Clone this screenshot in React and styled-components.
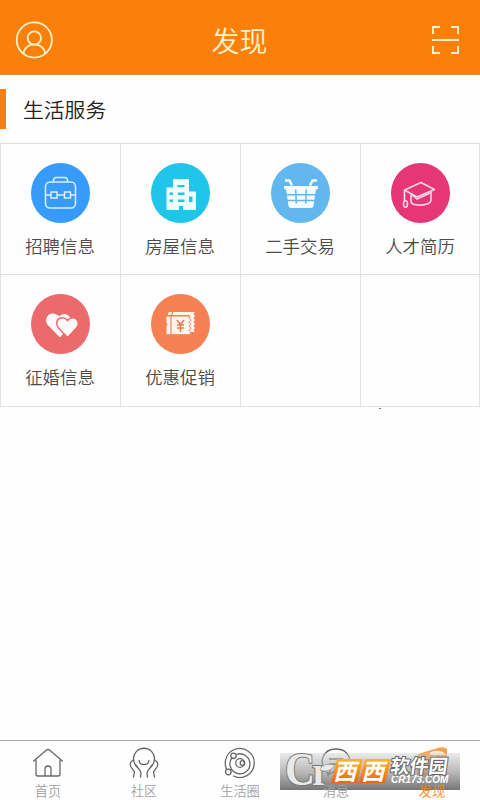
import React from "react";
import styled, { createGlobalStyle } from "styled-components";

const GlobalStyle = createGlobalStyle`
  * {
    box-sizing: border-box;
  }
  body {
    margin: 0;
    background: #fefefe;
    font-family: "Noto Sans CJK SC", "Noto Sans", sans-serif;
    font-weight: 350;
  }
`;

const Screen = styled.div`
  position: relative;
  display: flex;
  flex-direction: column;
  width: 480px;
  height: 800px;
  overflow: hidden;
`;

const Header = styled.header`
  display: flex;
  align-items: center;
  justify-content: space-between;
  height: 75px;
  padding: 6px 20px 0 15px;
  background: #fa800b;
  border-bottom: 1px solid #dc8c49;
  color: #fff0c6;
`;

const Title = styled.h1`
  margin: 0;
  padding-right: 5px;
  font-size: 28px;
  line-height: 40px;
  font-weight: 350;
`;

const SectionHead = styled.div`
  display: flex;
  align-items: center;
  height: 68px;
`;

const Marker = styled.span`
  width: 6px;
  height: 40px;
  background: #f8800f;
`;

const SectionTitle = styled.h2`
  margin: 0 0 0 17px;
  font-size: 20.8px;
  line-height: 30px;
  font-weight: 350;
  color: #222;
`;

const Grid = styled.div`
  display: grid;
  grid-template-columns: repeat(4, 120px);
  grid-template-rows: 131px 132px;
  border-top: 1px solid #dedede;
`;

const Cell = styled.div`
  display: flex;
  flex-direction: column;
  align-items: center;
  padding: 19px 1px 0 0;
  border-left: 1px solid #e2e2e2;
  border-bottom: 1px solid #dedede;
  &:nth-child(4n) {
    padding-right: 0;
    border-right: 1px solid #e2e2e2;
  }
`;

const Circle = styled.div`
  width: 59px;
  height: 60px;
  border-radius: 50%;
  background: ${(props) => props.$color};
  svg {
    display: block;
    width: 59px;
    height: 60px;
  }
`;

const CellLabel = styled.span`
  margin-top: 10px;
  font-size: 17.4px;
  line-height: 26px;
  color: #4c4c4c;
  white-space: nowrap;
`;

const Speck = styled.span`
  width: 2px;
  height: 1px;
  margin: 1px 0 0 379px;
  background: #777;
`;

const TabBar = styled.nav`
  display: flex;
  height: 60px;
  margin-top: auto;
  border-top: 1px solid #a9a9a9;
`;

const Tab = styled.div`
  display: flex;
  flex: 1;
  flex-direction: column;
  align-items: center;
  padding-top: 6px;
  color: ${(props) => (props.$active ? "#f5a04d" : "#686868")};
  svg {
    display: block;
    flex-shrink: 0;
  }
`;

const TabLabel = styled.span`
  position: relative;
  z-index: 2;
  margin-top: 2px;
  font-size: 13.2px;
  line-height: 20px;
  color: ${(props) => (props.$active ? "#f0871c" : "#a2a2a2")};
`;

/* site stamp lying over the tab bar */
const Stamp = styled.div`
  position: absolute;
  left: 280px;
  top: 753px;
  z-index: 1;
  display: flex;
  width: 180px;
  height: 37px;
  background: linear-gradient(
    rgba(205, 205, 205, 0.4),
    rgba(160, 160, 160, 0.72) 50%,
    rgba(110, 110, 110, 0.94)
  );
`;

const StampInitials = styled.svg`
  flex: none;
  width: 54px;
  height: 37px;
  overflow: visible;
  fill: #e9e9e9;
  stroke: #777;
  stroke-width: 2px;
  paint-order: stroke;
  font-family: "Liberation Serif", serif;
  font-weight: 700;
`;

const StampBadge = styled.span`
  display: flex;
  flex: none;
  width: 54px;
  height: 24px;
  margin-top: 6px;
  gap: 2px;
  transform: skewX(-14deg);
`;

const BadgeChar = styled.span`
  flex: 1;
  background: linear-gradient(#ffb52c, #ee6413);
  color: #fff;
  font-size: 23px;
  font-weight: 700;
  line-height: 22px;
  text-align: center;
`;

const StampText = styled.span`
  display: flex;
  flex-direction: column;
  padding: 1px 0 0 3px;
  color: #fff;
  font-weight: 700;
  -webkit-text-stroke: 2px #666;
  paint-order: stroke fill;
  white-space: nowrap;
`;

const StampName = styled.span`
  font-size: 19px;
  line-height: 21px;
  transform: skewX(-8deg);
`;

const StampSite = styled.span`
  font-family: "Liberation Sans", sans-serif;
  font-size: 10px;
  font-style: italic;
  line-height: 10px;
  -webkit-text-stroke: 0;
`;

const UserIcon = () => (
  <svg width="38" height="38" viewBox="0 0 38 38" fill="none" stroke="currentColor" strokeWidth="1.8">
    <circle cx="19.3" cy="19" r="17.6" />
    <circle cx="19.3" cy="17" r="6.7" />
    <path d="M8.600 33c0-5.500 4.600-9.600 10.700-9.600S30 27.500 30 33" />
  </svg>
);

const ScanIcon = () => (
  <svg width="29" height="30" viewBox="0 0 29 30" fill="none" stroke="currentColor" strokeWidth="2">
    <path d="M2 9V2h7M20 2h7v7M2 21v7h7M20 28h7v-7M1 15h27" />
  </svg>
);

const BagIcon = () => (
  <svg viewBox="0 0 59 60" fill="none" stroke="#d9f1ff" strokeWidth="1.5">
    <rect x="14.500" y="19" width="30" height="26" rx="4.500" />
    <path d="M22.500 19v-1.500a3 3 0 0 1 3-3h8a3 3 0 0 1 3 3V19M14.500 32h5.500M26 32h7.500M39.500 32h5" />
    <rect x="20" y="29" width="6" height="6" />
    <rect x="33.500" y="29" width="6" height="6" />
  </svg>
);

const BuildingIcon = () => (
  <svg viewBox="0 0 59 60" fill="#effeff">
    <path
      fillRule="evenodd"
      d="M15.500 24.500H22V17q0-1 1-1h14q1 0 1 1v11.500h6q1 0 1 1V46q0 1-1 1H32v-4h-4v4H16.500q-1 0-1-1zM26.500 22v2.200h7V22zM18.500 29.500V32H22v-2.500zM27 29.500V32h6.500v-2.500zM18.500 36.500V39H22v-2.500zM27 36.500V39h6.500v-2.500zM38 33.500V39h3.500v-5.500z"
    />
  </svg>
);

const BasketIcon = () => (
  <svg viewBox="0 0 59 60" fill="#f4fcff">
    <path d="M13 23h34v2.500l-2 1.500H15l-2-1.500z" />
    <path d="M15 26h30l-2.500 17q-.3 2-2.500 2H20q-2.200 0-2.500-2z" />
    <path d="M14 17.500h4.500l2.500 5M46 17.500h-4.500l-2.500 5" fill="none" stroke="#f4fcff" strokeWidth="2.500" />
    <path d="M15 31.700h30M16 37.500h28M24.700 26.500l.6 14M35.300 26.500l-.6 14" fill="none" stroke="#61b7ee" strokeWidth="1.500" />
  </svg>
);

const CapIcon = () => (
  <svg viewBox="0 0 59 60" fill="none" stroke="#ffd8e8" strokeWidth="1.600" strokeLinejoin="round">
    <path d="M13.500 27 30 19.500 43.500 26.500 26 34z" />
    <path d="M20 31.500V38q0 3 4.500 3.800 6 1 11.500-.8 4-1.300 4-4v-8M13.500 27v11" />
    <path d="M20.500 31.500 26 36l13-6" />
    <ellipse cx="14.500" cy="41" rx="2" ry="3.200" />
  </svg>
);

const HeartsIcon = () => (
  <svg viewBox="0 0 59 60">
    <path d="M28.500 43 17.300 31.600c-3.600-3.700-2.600-10 2.100-11.700 3.600-1.300 7 .3 8.800 2.600 2-2.300 5.200-3.200 8.300-1.600 2.500 1.300 4 3.600 4 6.500L30 42.500q-.8.900-1.500.5z" fill="#fffafa" />
    <path d="M36.500 43.500 27.500 34c-3.200-3.600-2-8.700 2-10 2.900-.8 5.500.4 7 2.500 1.500-2.100 4.100-3.300 7-2.500 4 1.300 5.200 6.400 2 10z" fill="#fffafa" stroke="#eb6b6c" strokeWidth="1.500" />
  </svg>
);

const CouponIcon = () => (
  <svg viewBox="0 0 59 60">
    <path d="M17 21V20q0-2 2-2h25l-1.500 2 1.500 2-1.500 2 1.500 2-1.500 2 1.500 2-1.500 2 1.500 2-1.500 2 1.500 2H38V21z" fill="#fff6ee" />
    <path d="M15 22h24l-1 2.200 2 2-2 2 2 2-2 2 2 2-2 2 2 2-1 2.500H15v-8q2-2 0-4z" fill="#fff6ee" stroke="#f58054" strokeWidth="1" />
    <path d="M20 22v18M22 18l-2 4" stroke="#f58054" strokeWidth="1.200" />
    <path d="m26 26 3.500 4.500L33 26M29.500 30v8M26 31h7M26 34h7" fill="none" stroke="#f07949" strokeWidth="1.500" />
  </svg>
);

const HomeIcon = () => (
  <svg width="32" height="32" viewBox="0 0 32 32" fill="none" stroke="currentColor" strokeWidth="1.300" strokeLinejoin="round" strokeLinecap="round">
    <path d="m1.700 14 12.800-11q1.500-1 3 0l12.800 11M4 12.500V27q0 2 2 2h20q2 0 2-2V12.500M13 29v-7q0-3 3-3t3 3v7" />
  </svg>
);

const CommunityIcon = () => (
  <svg width="32" height="32" viewBox="0 0 32 32" fill="none" stroke="currentColor" strokeWidth="1.300" strokeLinecap="round">
    <path d="M9.500 20A10.500 10.500 0 1 1 22.500 20M11 13.500c1 5.500 9 5.500 10 0" />
    <path d="M5.500 13c-3 1-4 4-2.500 7l3.500 5-1 5M26.500 13c3 1 4 4 2.500 7l-3.500 5 1 5M7.500 18l4.500 5.500c1.500 1.500 1 4 .5 6.500M24.500 18 20 23.500c-1.500 1.500-1 4-.5 6.500" />
  </svg>
);

const OrbitIcon = () => (
  <svg width="32" height="32" viewBox="0 0 32 32" fill="none" stroke="currentColor" strokeWidth="1.300">
    <path d="M5.800 26.500A14.500 14.500 0 1 1 9 28.800M12.300 7.500A10 10 0 1 1 7.800 11" />
    <circle cx="16" cy="16" r="4.300" />
    <circle cx="18.500" cy="16" r="2.300" />
    <circle cx="9.500" cy="8.800" r="2.700" fill="#fefefe" />
    <circle cx="4.300" cy="25" r="2.800" fill="#fefefe" />
  </svg>
);

const MessageIcon = () => (
  <svg width="32" height="32" viewBox="0 0 32 32" fill="none" stroke="currentColor" strokeWidth="1.300">
    <path d="M8 28v-4C-3 16 3 2 16 2s19 14 8 21c-4 3-9 2-11 2zM9 12h14M9 17h9" />
  </svg>
);

const DiscoverIcon = () => (
  <svg width="32" height="32" viewBox="0 0 32 32" fill="currentColor">
    <path d="M1 10q0-3 4-4L22 1q6-2 9 1v24q0 4-4 4H5q-4 0-4-4z" />
    <path d="M13 6q7-4 14-1l3 3H16z" fill="#fff0dc" />
    <circle cx="18" cy="13" r="4" fill="#fff0dc" />
  </svg>
);

const services = [
  { label: "招聘信息", color: "#369bfa", icon: <BagIcon /> },
  { label: "房屋信息", color: "#20c5ea", icon: <BuildingIcon /> },
  { label: "二手交易", color: "#61b7ee", icon: <BasketIcon /> },
  { label: "人才简历", color: "#e53776", icon: <CapIcon /> },
  { label: "征婚信息", color: "#eb6b6c", icon: <HeartsIcon /> },
  { label: "优惠促销", color: "#f58054", icon: <CouponIcon /> },
  {},
  {},
];

const tabs = [
  { label: "首页", icon: <HomeIcon /> },
  { label: "社区", icon: <CommunityIcon /> },
  { label: "生活圈", icon: <OrbitIcon /> },
  { label: "消息", icon: <MessageIcon /> },
  { label: "发现", icon: <DiscoverIcon />, active: true },
];

const App = () => {
  return (
    <Screen>
      <GlobalStyle />
      <Header>
        <UserIcon />
        <Title>发现</Title>
        <ScanIcon />
      </Header>
      <SectionHead>
        <Marker />
        <SectionTitle>生活服务</SectionTitle>
      </SectionHead>
      <Grid>
        {services.map((item, index) => (
          <Cell key={index}>
            {item.label && (
              <>
                <Circle $color={item.color}>{item.icon}</Circle>
                <CellLabel>{item.label}</CellLabel>
              </>
            )}
          </Cell>
        ))}
      </Grid>
      <Speck />
      <TabBar>
        {tabs.map((tab) => (
          <Tab key={tab.label} $active={tab.active}>
            {tab.icon}
            <TabLabel $active={tab.active}>{tab.label}</TabLabel>
          </Tab>
        ))}
      </TabBar>
      <Stamp>
        <StampInitials viewBox="0 0 54 37">
          <text x="5" y="32" fontSize="47" textLength="30" lengthAdjust="spacingAndGlyphs">C</text>
          <text x="32" y="32" fontSize="40">r</text>
          <path d="M40 17q3-7 14-5-3 8-14 5z" strokeWidth="1" />
        </StampInitials>
        <StampBadge>
          <BadgeChar>西</BadgeChar>
          <BadgeChar>西</BadgeChar>
        </StampBadge>
        <StampText>
          <StampName>软件园</StampName>
          <StampSite>CR173.COM</StampSite>
        </StampText>
      </Stamp>
    </Screen>
  );
};

export default App;
